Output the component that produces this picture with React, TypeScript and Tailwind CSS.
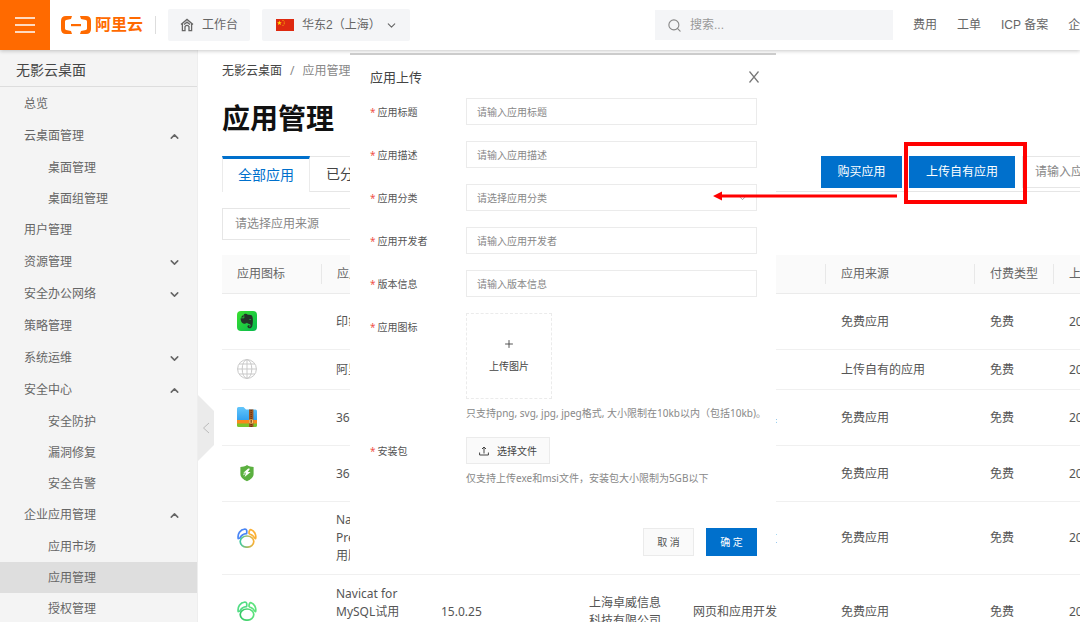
import React from 'react';
import { ChevronDown, ChevronUp, Plus, Search } from 'lucide-react';

interface NavItem {
    label: string;
    children?: string[];
    open?: boolean;
}

interface AppRow {
    icon: React.ReactNode;
    name: string;
    version: string;
    developer: string;
    category: string;
    source: string;
    date: string;
    height: string;
}

const navItems: NavItem[] = [
    { label: '总览' },
    { label: '云桌面管理', open: true, children: ['桌面管理', '桌面组管理'] },
    { label: '用户管理' },
    { label: '资源管理', children: [] },
    { label: '安全办公网络', children: [] },
    { label: '策略管理' },
    { label: '系统运维', children: [] },
    { label: '安全中心', open: true, children: ['安全防护', '漏洞修复', '安全告警'] },
    { label: '企业应用管理', open: true, children: ['应用市场', '应用管理', '授权管理'] },
];

const EvernoteIcon = () => (
    <svg width="20" height="20" viewBox="0 0 20 20">
        <defs>
            <linearGradient id="ever" x1="0" y1="0" x2="1" y2="1">
                <stop offset="0" stopColor="#3be02f" />
                <stop offset="1" stopColor="#06b84e" />
            </linearGradient>
        </defs>
        <rect width="20" height="20" rx="4" fill="url(#ever)" />
        <path d="M7 3.2 C8.5 2.6 10 2.8 10.8 3.7 C12.5 3.7 14.6 3.8 15.2 5 C16.2 7.5 16 11.5 15.4 14.5 C15 16.8 13.5 17.6 11.9 17.2 C10.2 16.8 9.9 14.9 11.2 14.3 L12.6 14.2 L12.6 15.4 L11.8 15.5 C12.4 16.2 13.5 16 13.6 14.8 C13.6 13.4 12.8 12.9 11.4 12.8 C10.6 12.8 10.2 12.2 10 11.6 C9.5 12.8 7.8 12.8 6.2 12.4 C4.4 12 3.6 9.6 3.6 7.2 L6.3 7.2 C7.1 7.2 7.3 6.8 7.3 6.2 Z M3.8 6.5 L6.6 3.6 L6.6 6.5 Z" fill="#243229" />
        <path d="M12.1 8.7 C12.4 7.6 14 7.7 14.3 9 C13.6 8.7 12.9 8.6 12.1 8.7 Z" fill="#1fce3f" />
    </svg>
);

const GlobeIcon = () => (
    <svg width="20" height="20" viewBox="0 0 20 20" fill="none" stroke="#c9c9c9" strokeWidth="1">
        <circle cx="10" cy="10" r="9.4" />
        <ellipse cx="10" cy="10" rx="4.8" ry="9.4" />
        <path d="M10 0.6 V19.4 M0.6 10 H19.4 M2.2 5 H17.8 M2.2 15 H17.8" />
    </svg>
);

const ZipIcon = () => (
    <svg width="20" height="20" viewBox="0 0 20 20">
        <defs>
            <linearGradient id="zip" x1="0" y1="0" x2="0" y2="1">
                <stop offset="0" stopColor="#63c6fb" />
                <stop offset="1" stopColor="#2f9ff0" />
            </linearGradient>
        </defs>
        <path d="M0 1.5 Q0 0 1.5 0 H6.5 L9 2.4 H18.5 Q20 2.4 20 4 V14 H0 Z" fill="url(#zip)" />
        <path d="M0 13 H20 V17 H0 Z" fill="#f98a1c" />
        <path d="M0 16.5 H20 V18.5 Q20 20 18.5 20 H1.5 Q0 20 0 18.5 Z" fill="#7bc52d" />
        <rect x="12" y="2.4" width="4.4" height="17.6" fill="#9a5522" />
        <path d="M14.2 3 V20" stroke="#6b3611" strokeWidth="1.4" strokeDasharray="1 1" />
        <rect x="12.2" y="12.4" width="4" height="4" rx="0.6" fill="#f7c76b" />
        <rect x="13.5" y="13" width="1.4" height="2.8" fill="#8a4a1c" />
    </svg>
);

const ShieldIcon = () => (
    <svg width="20" height="20" viewBox="0 0 20 20">
        <path d="M10 2 C12 3.4 14.4 3.9 16.6 4 V11 C16.6 14.4 13.6 16.6 10 18.2 C6.4 16.6 3.4 14.4 3.4 11 V4 C5.6 3.9 8 3.4 10 2 Z" fill="#5bb040" />
        <path d="M11.2 5.6 L6.4 9.8 H9 L7.6 14 L13.6 8.9 H10.8 L13 5.8 Z M6.6 10.4 L6.4 12.4 L8.6 10.6 Z" fill="#fff" />
    </svg>
);

const NavicatIcon: React.FC<{ id: string; left: string; right: string; bottom: string }> = ({ id, left, right, bottom }) => (
    <svg width="20" height="20" viewBox="0 0 20 20" fill="none" strokeWidth="1.7" strokeLinejoin="round" strokeLinecap="round">
        <defs>
            <linearGradient id={id} x1="0" y1="0" x2="1" y2="0">
                <stop offset="0" stopColor={bottom} />
                <stop offset="1" stopColor={right} />
            </linearGradient>
        </defs>
        <path d="M1.2 10.6 C0.4 5.6 3 1.6 8 1 C9.8 1 10 3 9.6 5.6 C6.6 5.8 4 7.4 2.8 10.2" stroke={left} />
        <path d="M12 5.2 C12 3 12.8 1.4 14.2 1.8 C17.6 3 19.4 7 18.6 10.6 C17.6 10.4 16.8 8.4 15.4 7.4 C14 6.4 12.4 6.4 12 5.2 Z" stroke={right} />
        <ellipse cx="10" cy="13.6" rx="6.8" ry="5.6" stroke={`url(#${id})`} />
    </svg>
);

const rows: AppRow[] = [
    { icon: <EvernoteIcon />, name: '印象笔记', version: '7.2.2', developer: '印象笔记', category: '办公软件', source: '免费应用', date: '2022-03-10', height: 'h-14' },
    { icon: <GlobeIcon />, name: '阿里云盘', version: '1.0', developer: '阿里云', category: '其他', source: '上传自有的应用', date: '2022-03-10', height: 'h-10' },
    { icon: <ZipIcon />, name: '360压缩', version: '4.0', developer: '奇虎科技', category: '系统和安全工具', source: '免费应用', date: '2022-03-10', height: 'h-14' },
    { icon: <ShieldIcon />, name: '360安全', version: '13.1', developer: '奇虎科技', category: '安全工具', source: '免费应用', date: '2022-03-10', height: 'h-14' },
    { icon: <NavicatIcon id="navp" left="#4a86f5" right="#fbb034" bottom="#3fc9a0" />, name: 'Navicat\nPremium试\n用版', version: '15.0.25', developer: '上海卓威信息\n科技有限公司', category: '网页和应用开发', source: '免费应用', date: '2022-03-10', height: 'h-[73px]' },
    { icon: <NavicatIcon id="navm" left="#52dd85" right="#5ce27c" bottom="#35c866" />, name: 'Navicat for\nMySQL试用\n版', version: '15.0.25', developer: '上海卓威信息\n科技有限公司', category: '网页和应用开发', source: '免费应用', date: '2022-03-10', height: 'h-[74px]' },
];

const headings = ['应用图标', '应用名称', '版本信息', '应用开发者', '应用分类', '应用来源', '付费类型', '上架时间'];

const Header = () => (
    <header className="relative z-20 flex h-[50px] shrink-0 items-center bg-white font-['Liberation_Sans','Noto_Sans_CJK_SC',sans-serif] text-xs text-[#666] shadow-[0_1px_4px_rgba(0,0,0,0.22)]">
        <button aria-label="菜单" className="flex h-full w-[50px] items-center justify-center bg-[#ff6a00]">
            <svg width="20" height="16" viewBox="0 0 20 16" stroke="#fff" strokeWidth="1.6">
                <path d="M0 1 H20 M0 8 H20 M0 15 H20" />
            </svg>
        </button>
        <a href="#" className="ml-[11px] flex items-center gap-1 text-[#ff6a00]">
            <svg width="30" height="18" viewBox="0 0 30 18" fill="currentColor">
                <path d="M11 0 L10 3 L5.2 4 Q4 4.3 4 5.5 V12.5 Q4 13.7 5.2 14 L10 15 L11 18 H5 Q0 18 0 13 V5 Q0 0 5 0 Z" />
                <path d="M19 0 L20 3 L24.8 4 Q26 4.3 26 5.5 V12.5 Q26 13.7 24.8 14 L20 15 L19 18 H25 Q30 18 30 13 V5 Q30 0 25 0 Z" />
                <rect x="10" y="8" width="10" height="2.2" />
            </svg>
            <span className="text-base font-bold leading-5">阿里云</span>
        </a>
        <span className="ml-3 h-[18px] w-px bg-[#ddd]" />
        <button className="ml-3 flex h-8 items-center gap-2 rounded-xs bg-[#f4f5f7] px-3">
            <svg width="14" height="14" viewBox="0 0 14 14" fill="none" stroke="#666" strokeWidth="1.3">
                <path d="M1 6.6 L7 1.4 L13 6.6 M2.4 5.8 V12.6 H5 V8.6 Q7 6.2 9 8.6 V12.6 H11.6 V5.8 M4 6.6 L7 4.2 L10 6.6" />
            </svg>
            工作台
        </button>
        <button className="ml-3 flex h-8 w-[148px] items-center rounded-xs bg-[#f4f5f7] pl-3.5">
            <svg width="18" height="12" viewBox="0 0 18 12">
                <rect width="18" height="12" fill="#de2910" />
                <path d="M3.4 1.4 L4 3.2 H5.8 L4.4 4.3 L4.9 6.1 L3.4 5 L1.9 6.1 L2.4 4.3 L1 3.2 H2.8 Z" fill="#ffde00" />
                <circle cx="7" cy="1.6" r="0.5" fill="#ffde00" />
                <circle cx="8.2" cy="3" r="0.5" fill="#ffde00" />
                <circle cx="8.2" cy="4.8" r="0.5" fill="#ffde00" />
                <circle cx="7" cy="6.2" r="0.5" fill="#ffde00" />
            </svg>
            <span className="ml-2">华东2（上海）</span>
            <ChevronDown className="ml-1" size={13} strokeWidth={2} />
        </button>
        <div className="ml-auto flex w-[425px] shrink-0 items-center gap-5 overflow-hidden whitespace-nowrap">
            <label className="flex h-[30px] w-[238px] shrink-0 items-center gap-2 bg-[#f4f5f7] pl-3">
                <Search size={15} strokeWidth={1.8} className="text-[#888]" />
                <input aria-label="搜索" placeholder="搜索..." className="min-w-0 flex-1 bg-transparent outline-none placeholder:text-[#999]" />
            </label>
            <a href="#">费用</a>
            <a href="#">工单</a>
            <a href="#">ICP 备案</a>
            <a href="#">企业</a>
        </div>
    </header>
);

const Sidebar = () => (
    <aside className="w-[198px] shrink-0 border-r border-[#eee] bg-[#f4f4f4] text-[#666]">
        <h2 className="flex h-[37px] items-center border-b border-[#ddd] pl-4 pt-1 text-sm text-[#444]">无影云桌面</h2>
        <nav className="pt-px">
            {navItems.map(item => (
                <React.Fragment key={item.label}>
                    <button className="flex h-8 w-full items-center justify-between pl-6 pr-4">
                        {item.label}
                        {item.children && (item.open ? <ChevronUp size={13} strokeWidth={2.8} /> : <ChevronDown size={13} strokeWidth={2.8} />)}
                    </button>
                    {item.children?.map(child => (
                        <a
                            key={child}
                            href="#"
                            className={`flex h-[31px] items-center pl-12 ${child === '应用管理' ? 'bg-[#dedede]' : ''}`}
                        >
                            {child}
                        </a>
                    ))}
                </React.Fragment>
            ))}
        </nav>
    </aside>
);

const AppTable = () => (
    <table className="mt-[15px] w-full min-w-[960px] table-fixed border-collapse text-left text-[#555]">
        <colgroup>
            <col className="w-[99px]" />
            <col className="w-[104px]" />
            <col className="w-[148px]" />
            <col className="w-[104px]" />
            <col className="w-[148px]" />
            <col className="w-[149px]" />
            <col className="w-[79px]" />
            <col />
        </colgroup>
        <thead>
            <tr className="h-[38px] border-b border-[#ebebeb] bg-[#fafafa] text-[#666]">
                {headings.map((heading, i) => (
                    <th key={heading} className="whitespace-nowrap p-0 font-normal">
                        <div className={`h-5 pl-[15px] leading-5 ${i > 0 ? 'border-l border-[#e8e8e8]' : ''}`}>{heading}</div>
                    </th>
                ))}
            </tr>
        </thead>
        <tbody>
            {rows.map((row, i) => (
                <tr key={i} className={`${row.height} whitespace-pre border-b border-[#f0f0f0] leading-[18px]`}>
                    <td className="pl-[15px]">{row.icon}</td>
                    <td className="pl-[15px] pt-px">{row.name}</td>
                    <td className="pl-4 pt-px">{row.version}</td>
                    <td className="pl-4 pt-px">{row.developer}</td>
                    <td className="pl-4 pt-px">{row.category}</td>
                    <td className="pl-4 pt-px">{row.source}</td>
                    <td className="pl-4 pt-px">免费</td>
                    <td className="pl-4 pt-px">{row.date}</td>
                </tr>
            ))}
        </tbody>
    </table>
);

const Field: React.FC<{ id: string; label: string; children: React.ReactNode }> = ({ id, label, children }) => (
    <div className="flex">
        <label htmlFor={id} className="flex h-[27px] w-24 shrink-0 items-center gap-0.5 text-[#555]">
            <span className="text-[#f0554a]">*</span>
            {label}
        </label>
        <div className="min-w-0 flex-1">{children}</div>
    </div>
);

const inputClass = 'block h-[27px] w-full border border-[#ebebeb] bg-white px-2.5 outline-none placeholder:text-[#888]';

const UploadDialog = () => (
    <div role="dialog" aria-label="应用上传" className="absolute left-[350px] top-[53px] z-30 h-[520px] w-[426px] border-t-2 border-[#ccc] bg-white pl-5 pr-[19px] text-[10px] leading-4">
        <div className="flex h-[43px] items-center justify-between text-[#444]">
            <h3 className="text-[13px]">应用上传</h3>
            <button aria-label="关闭" className="-mr-0.5 text-[#777]">
                <svg width="10" height="12" viewBox="0 0 10 12" stroke="currentColor" strokeWidth="1.2">
                    <path d="M0.5 0.5 L9.5 11.5 M9.5 0.5 L0.5 11.5" />
                </svg>
            </button>
        </div>
        <form className="flex flex-col gap-4">
            <Field id="title" label="应用标题">
                <input id="title" className={inputClass} placeholder="请输入应用标题" />
            </Field>
            <Field id="desc" label="应用描述">
                <input id="desc" className={inputClass} placeholder="请输入应用描述" />
            </Field>
            <Field id="category" label="应用分类">
                <div className="relative">
                    <select id="category" className={`${inputClass} appearance-none text-[#888]`}>
                        <option>请选择应用分类</option>
                    </select>
                    <ChevronDown size={9} className="absolute right-2.5 top-2.5 text-[#888]" />
                </div>
            </Field>
            <Field id="developer" label="应用开发者">
                <input id="developer" className={inputClass} placeholder="请输入应用开发者" />
            </Field>
            <Field id="version" label="版本信息">
                <input id="version" className={inputClass} placeholder="请输入版本信息" />
            </Field>
            <Field id="icon" label="应用图标">
                <button id="icon" type="button" className="flex h-[86px] w-[86px] flex-col items-center justify-center gap-2 border border-dashed border-[#ebebeb] text-[#444]">
                    <Plus size={12} strokeWidth={1.8} />
                    上传图片
                </button>
                <p className="mt-1.5 whitespace-nowrap text-[#888]">只支持png, svg, jpg, jpeg格式, 大小限制在10kb以内（包括10kb)。</p>
            </Field>
            <Field id="package" label="安装包">
                <button id="package" type="button" className="flex h-[27px] w-[84px] items-center justify-center gap-2 border border-[#ebebeb] bg-[#fafafa] text-[#444]">
                    <svg width="10" height="10" viewBox="0 0 10 10" fill="none" stroke="currentColor" strokeWidth="1">
                        <path d="M0.6 6.5 V9 H9.4 V6.5 M5 7.5 V1 M3 3 L5 1 L7 3" />
                    </svg>
                    选择文件
                </button>
                <p className="mt-1.5 whitespace-nowrap text-[#888]">仅支持上传exe和msi文件，安装包大小限制为5GB以下</p>
            </Field>
        </form>
        <div className="mt-[42px] flex justify-end gap-3">
            <button className="h-7 w-[51px] border border-[#ebebeb] bg-[#fafafa] text-[#555]">取 消</button>
            <button className="h-7 w-[51px] bg-[#0070cc] text-white">确 定</button>
        </div>
    </div>
);

const App = () => (
    <div className="relative flex h-screen flex-col overflow-hidden bg-white font-['Noto_Sans','Noto_Sans_CJK_SC',sans-serif] text-xs">
        <Header />
        <div className="flex min-h-0 flex-1">
            <Sidebar />
            <main className="relative min-w-0 flex-1 overflow-hidden pl-6 pt-[13px]">
                <button aria-label="收起" className="absolute left-0 top-[345px] h-[66px] w-4">
                    <svg width="16" height="66" viewBox="0 0 16 66">
                        <path d="M0 0 L16 16 V50 L0 66 Z" fill="#ebebeb" />
                        <path d="M11 28 L5.5 33 L11 38" fill="none" stroke="#bbb" />
                    </svg>
                </button>
                <div className="flex gap-2 leading-4 text-[#888]">
                    <a href="#" className="text-[#444]">无影云桌面</a>
                    <span>/</span>
                    <span>应用管理</span>
                </div>
                <h1 className="mt-[19px] text-[28px] font-bold leading-10 text-[#111]">应用管理</h1>
                <div className="mt-[18px] flex h-9 text-sm">
                    <button className="w-[88px] shrink-0 border-x border-t-[3px] border-x-[#ebebeb] border-t-[#0070cc] pb-0.5 text-[#0070cc]">全部应用</button>
                    <button className="shrink-0 border-y border-r border-[#e6e6e6] px-4 text-[#444]">已分配应用</button>
                    <div className="flex flex-1 justify-end border-b border-[#e6e6e6]">
                        <div className="flex h-8 w-[259px] shrink-0 overflow-hidden text-xs">
                            <button className="w-[81px] shrink-0 bg-[#0070cc] text-white">购买应用</button>
                            <button className="ml-[7px] w-[106px] shrink-0 bg-[#0070cc] text-white">上传自有应用</button>
                            <input aria-label="应用名称" placeholder="请输入应用名称" className="ml-[7px] w-40 shrink-0 border border-[#e6e6e6] px-3 outline-none placeholder:text-[#888]" />
                        </div>
                    </div>
                </div>
                <select aria-label="应用来源" className="mt-4 block h-8 w-[180px] appearance-none border border-[#e6e6e6] bg-white px-3 text-[#888]">
                    <option>请选择应用来源</option>
                </select>
                <AppTable />
            </main>
        </div>
        <UploadDialog />
        <div className="absolute right-[53px] top-[142px] z-40 h-[62px] w-[123px] border-4 border-[#ff0000]" />
        <svg className="absolute right-[183px] top-[191px] z-40" width="184" height="10" viewBox="0 0 184 10">
            <path d="M0 5 L9 0.5 V3.5 H184 V6.5 H9 V9.5 Z" fill="#ff0000" />
        </svg>
    </div>
);

export default App;
